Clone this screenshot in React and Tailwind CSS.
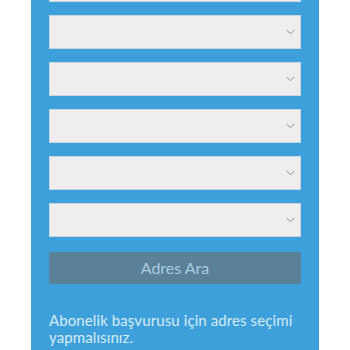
import React from "react";

function SelectBox() {
  return (
    <div className="flex h-[34px] items-center justify-end border border-[#c7d6e0] bg-[#eeeeee] pr-[4px]">
      <svg width="9" height="6" viewBox="0 0 9 6" fill="none" className="mr-[1px]">
        <path d="M0.5 0.8 L4.5 4.8 L8.5 0.8" stroke="#8a8f94" strokeWidth="1" />
      </svg>
    </div>
  );
}

export default function App() {
  return (
    <div className="h-[350px] w-[350px] overflow-hidden bg-white" style={{ fontFamily: "Lato, 'Open Sans', sans-serif" }}>
      <div className="mx-[31px] flex h-[350px] flex-col bg-[#3ea0da] px-[18px]">
        <div className="mt-[-32px] flex flex-col gap-[13px]">
          {[0, 1, 2, 3, 4, 5].map((i) => (
            <SelectBox key={i} />
          ))}
        </div>
        <button
          type="button"
          className="mt-[15px] h-[32px] w-full bg-[#5a8198] text-[16px] text-[#a9cbe0]"
        >
          Adres Ara
        </button>
        <p className="mt-[28px] text-[15px] leading-[17px] tracking-[0.1px] text-[#d6ebf8]">
          Abonelik başvurusu için adres seçimi yapmalısınız.
        </p>
      </div>
    </div>
  );
}
